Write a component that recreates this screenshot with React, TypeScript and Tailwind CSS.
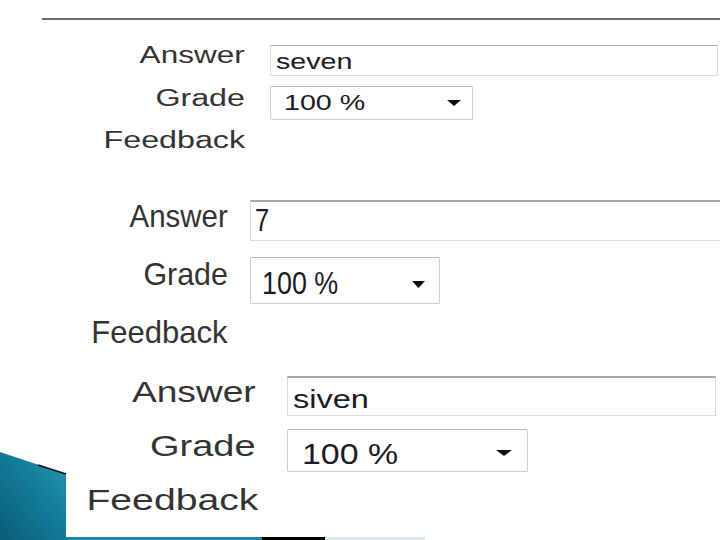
import React from "react"

const font = { fontFamily: '"Liberation Sans", Arial, sans-serif' }

function Arrow({ w, h }: { w: number; h: number }) {
  return (
    <svg width={w} height={h} viewBox={`0 0 ${w} ${h}`} className="block">
      <polygon points={`0,0 ${w},0 ${w / 2},${h}`} fill="#111" />
    </svg>
  )
}

function SlideCorner() {
  // teal template shape in the lower left
  return (
    <svg width="430" height="90" viewBox="0 0 430 90" className="absolute left-0 bottom-0">
      <defs>
        <linearGradient id="teal" x1="0" y1="1" x2="1" y2="0">
          <stop offset="0" stopColor="#0a5d78" />
          <stop offset="0.6" stopColor="#137f9c" />
          <stop offset="1" stopColor="#2a97b4" />
        </linearGradient>
      </defs>
      <polygon points="0,2 66,24 66,90 0,90" fill="url(#teal)" />
      <line x1="38" y1="15" x2="66" y2="24" stroke="#111" strokeWidth="1.5" />
      <rect x="66" y="87" width="196" height="3" fill="#1b87a5" />
      <rect x="262" y="87" width="63" height="3" fill="#000" />
      <rect x="325" y="87" width="100" height="3" fill="#dfe8ec" />
    </svg>
  )
}

export default function App() {
  return (
    <div className="relative w-[720px] h-[540px] bg-white overflow-hidden" style={font}>
      <SlideCorner />
      <div className="relative">
        <div className="mt-[18px] ml-[42px] h-[2px] bg-[#696969]"></div>

        {/* first screenshot: wide */}
        <div className="flex items-start mt-[25px]">
          <div className="w-[245px] shrink-0 text-right text-[23px] leading-[23px] text-[#333] -mt-[1px]">
            <span className="inline-block origin-right scale-x-[1.37]">Answer</span>
          </div>
          <div className="ml-[25px] w-[448px] h-[31px] shrink-0 border border-[#dcdcdc] border-t-[#a8a8a8] pl-[5px] pt-[5px] text-[22px] leading-[22px] text-[#1c1a28]">
            <span className="inline-block origin-left scale-x-[1.3]">seven</span>
          </div>
        </div>
        <div className="flex items-start mt-[10px]">
          <div className="w-[245px] shrink-0 text-right text-[23px] leading-[23px] text-[#333] mt-[1px]">
            <span className="inline-block origin-right scale-x-[1.4]">Grade</span>
          </div>
          <div className="ml-[25px] w-[203px] h-[34px] shrink-0 border border-[#cfcfcf] border-t-[#b8b8b8] rounded-[2px] flex items-start pl-[13px] pr-[11px] pt-[5px] text-[22px] leading-[22px] text-[#1c1a28]">
            <span className="inline-block origin-left scale-x-[1.3]">100 %</span>
            <div className="ml-auto mt-[8px]">
              <Arrow w={14} h={6} />
            </div>
          </div>
        </div>
        <div className="flex items-start mt-[9px]">
          <div className="w-[245px] shrink-0 text-right text-[23px] leading-[23px] text-[#333]">
            <span className="inline-block origin-right scale-x-[1.4]">Feedback</span>
          </div>
        </div>

        {/* second screenshot: narrow */}
        <div className="flex items-start mt-[48px]">
          <div className="w-[228px] shrink-0 text-right text-[32px] leading-[32px] text-[#333]">
            <span className="inline-block origin-right scale-x-[0.92]">Answer</span>
          </div>
          <div className="ml-[22px] w-[490px] h-[41px] shrink-0 border border-[#dcdcdc] border-t-2 border-t-[#a8a8a8] pl-[4px] pt-[3px] text-[31px] leading-[31px] text-[#1c1a28]">
            <span className="inline-block origin-left scale-x-[0.82]">7</span>
          </div>
        </div>
        <div className="flex items-start mt-[16px]">
          <div className="w-[228px] shrink-0 text-right text-[32px] leading-[32px] text-[#333] mt-[1px]">
            <span className="inline-block origin-right scale-x-[0.95]">Grade</span>
          </div>
          <div className="ml-[22px] w-[190px] h-[47px] shrink-0 border border-[#cfcfcf] border-t-[#b8b8b8] rounded-[2px] flex items-start pl-[11px] pr-[14px] pt-[9px] text-[32px] leading-[32px] text-[#1c1a28]">
            <span className="inline-block origin-left scale-x-[0.84]">100 %</span>
            <div className="ml-auto mt-[14px]">
              <Arrow w={13} h={7} />
            </div>
          </div>
        </div>
        <div className="flex items-start mt-[12px]">
          <div className="w-[228px] shrink-0 text-right text-[32px] leading-[32px] text-[#333]">
            <span className="inline-block origin-right scale-x-[0.97]">Feedback</span>
          </div>
        </div>

        {/* third screenshot: wide again */}
        <div className="flex items-start mt-[28px]">
          <div className="w-[256px] shrink-0 text-right text-[29px] leading-[29px] text-[#333] mt-[2px]">
            <span className="inline-block origin-right scale-x-[1.28]">Answer</span>
          </div>
          <div className="ml-[31px] w-[429px] h-[40px] shrink-0 border border-[#dcdcdc] border-t-2 border-t-[#a8a8a8] pl-[5px] pt-[8px] text-[26px] leading-[26px] text-[#1c1a28]">
            <span className="inline-block origin-left scale-x-[1.25]">siven</span>
          </div>
        </div>
        <div className="flex items-start mt-[13px]">
          <div className="w-[256px] shrink-0 text-right text-[29px] leading-[29px] text-[#333] mt-[3px]">
            <span className="inline-block origin-right scale-x-[1.31]">Grade</span>
          </div>
          <div className="ml-[31px] w-[241px] h-[43px] shrink-0 border border-[#cfcfcf] border-t-[#b8b8b8] rounded-[2px] flex items-start pl-[14px] pr-[15px] pt-[9px] text-[30px] leading-[30px] text-[#1c1a28]">
            <span className="inline-block origin-left scale-x-[1.13]">100 %</span>
            <div className="ml-auto mt-[11px]">
              <Arrow w={16} h={6} />
            </div>
          </div>
        </div>
        <div className="flex items-start mt-[14px]">
          <div className="w-[258px] shrink-0 text-right text-[29px] leading-[29px] text-[#333]">
            <span className="inline-block origin-right scale-x-[1.35]">Feedback</span>
          </div>
        </div>
      </div>
    </div>
  )
}
